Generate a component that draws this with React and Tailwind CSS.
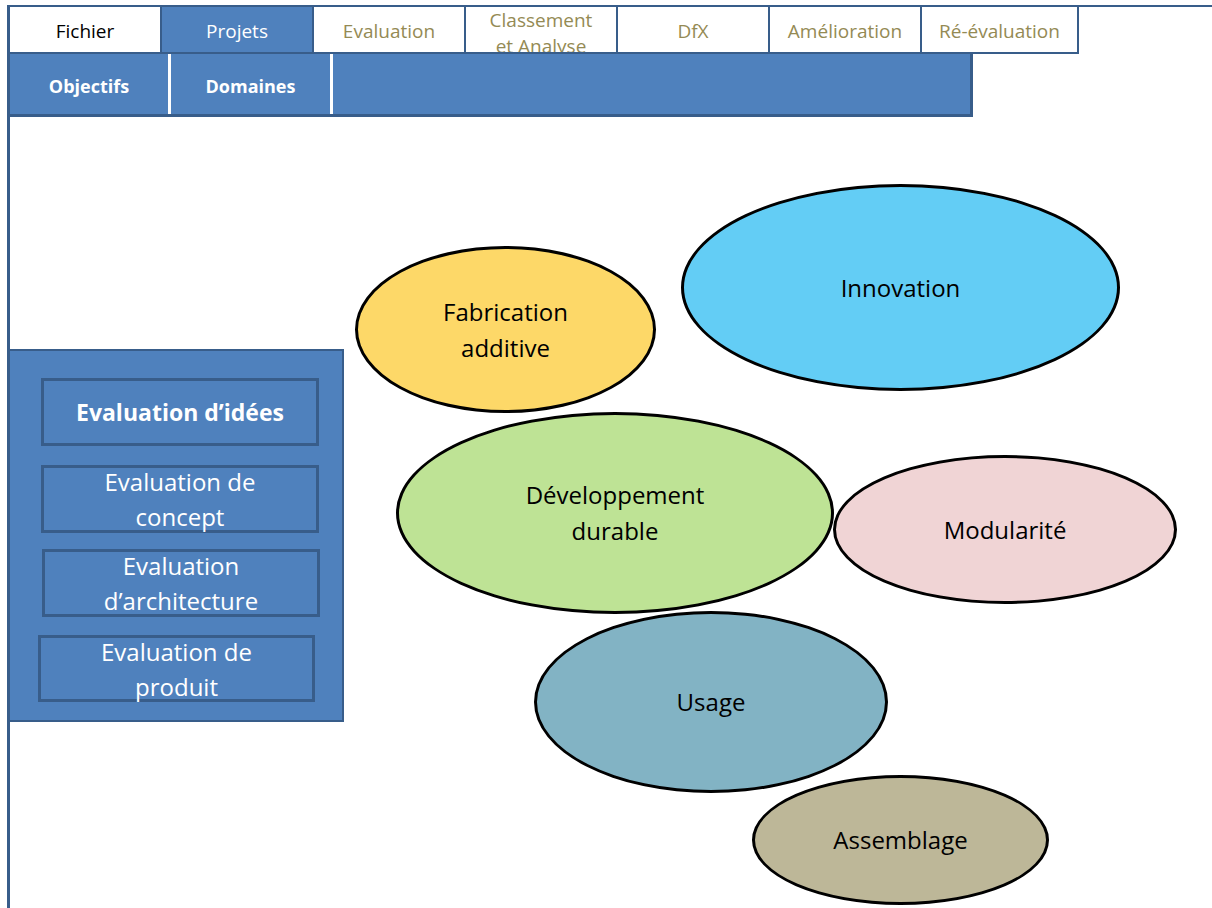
import React from "react";

const tabs = [
  { label: "Fichier", cls: "bg-white text-black" },
  { label: "Projets", cls: "bg-[#4f81bd] text-white" },
  { label: "Evaluation", cls: "bg-white text-[#948a54]" },
  { label: "Classement et Analyse", cls: "bg-white text-[#948a54]", two: true },
  { label: "DfX", cls: "bg-white text-[#948a54]" },
  { label: "Amélioration", cls: "bg-white text-[#948a54]" },
  { label: "Ré-évaluation", cls: "bg-white text-[#948a54]" },
];

const ellipses = [
  { t: ["Fabrication", "additive"], x: 355, y: 246, w: 301, h: 167, c: "bg-[#fdd868]" },
  { t: ["Innovation"], x: 681, y: 184, w: 439, h: 207, c: "bg-[#63cdf5]" },
  { t: ["Développement", "durable"], x: 396, y: 412, w: 438, h: 202, c: "bg-[#bee395]" },
  { t: ["Modularité"], x: 833, y: 455, w: 344, h: 149, c: "bg-[#f0d4d5]" },
  { t: ["Usage"], x: 534, y: 611, w: 354, h: 182, c: "bg-[#82b3c4]" },
  { t: ["Assemblage"], x: 752, y: 775, w: 297, h: 130, c: "bg-[#bdb798]" },
];

export default function App() {
  return (
    <div className="relative w-[1212px] h-[908px] overflow-hidden bg-white font-['Open_Sans','Noto_Sans',sans-serif]">
      <div className="pl-[7px] pt-[5px] h-full">
        <div className="h-full border-l-[3px] border-[#385d8a] flex flex-col">
          {/* tab row */}
          <div className="flex border-t-[2px] border-[#385d8a] h-[49px] shrink-0">
            {tabs.map((t, i) => (
              <div
                key={i}
                className={`${i === 6 ? "w-[157px]" : "w-[152px]"} h-[47px] border-r-[2px] border-b-[2px] border-[#385d8a] flex justify-center text-[19px] ${t.cls} ${t.two ? "items-start overflow-hidden" : "items-center"}`}
              >
                {t.two ? (
                  <div className="text-center leading-[26px]">
                    Classement
                    <br />
                    et Analyse
                  </div>
                ) : (
                  <span className="leading-none pt-[3px]">{t.label}</span>
                )}
              </div>
            ))}
          </div>
          {/* second row */}
          <div className="flex shrink-0 w-[963px] h-[63px] bg-[#4f81bd] border-r-[3px] border-b-[3px] border-[#385d8a] text-white font-bold text-[18px]">
            <div className="w-[161px] border-r-[3px] border-white flex items-center justify-center pt-[4px]">Objectifs</div>
            <div className="w-[162px] border-r-[3px] border-white flex items-center justify-center pt-[4px]">Domaines</div>
          </div>
          {/* left panel */}
          <div className="shrink-0 mt-[232px] -ml-[2px] w-[336px] h-[373px] bg-[#4f81bd] border-[2px] border-[#385d8a] pt-[27px] text-white text-[24px] leading-[35px]">
            <div className="ml-[31px] w-[278px] h-[68px] border-[3px] border-[#385d8a] flex items-center justify-center font-bold text-[23px]">
              Evaluation d’idées
            </div>
            <div className="mt-[19px] ml-[31px] w-[278px] h-[68px] border-[3px] border-[#385d8a] flex items-center justify-center text-center">
              <div>Evaluation de<br />concept</div>
            </div>
            <div className="mt-[16px] ml-[32px] w-[278px] h-[68px] border-[3px] border-[#385d8a] flex items-center justify-center text-center">
              <div>Evaluation<br />d’architecture</div>
            </div>
            <div className="mt-[18px] ml-[28px] w-[277px] h-[67px] border-[3px] border-[#385d8a] flex items-center justify-center text-center">
              <div>Evaluation de<br />produit</div>
            </div>
          </div>
        </div>
      </div>
      {ellipses.map((e, i) => (
        <div
          key={i}
          className={`absolute rounded-[50%] border-[3px] border-black flex items-center justify-center text-center text-black text-[24px] leading-[36px] ${e.c}`}
          style={{ left: e.x, top: e.y, width: e.w, height: e.h }}
        >
          <div>
            {e.t.map((l, j) => (
              <div key={j}>{l}</div>
            ))}
          </div>
        </div>
      ))}
    </div>
  );
}
